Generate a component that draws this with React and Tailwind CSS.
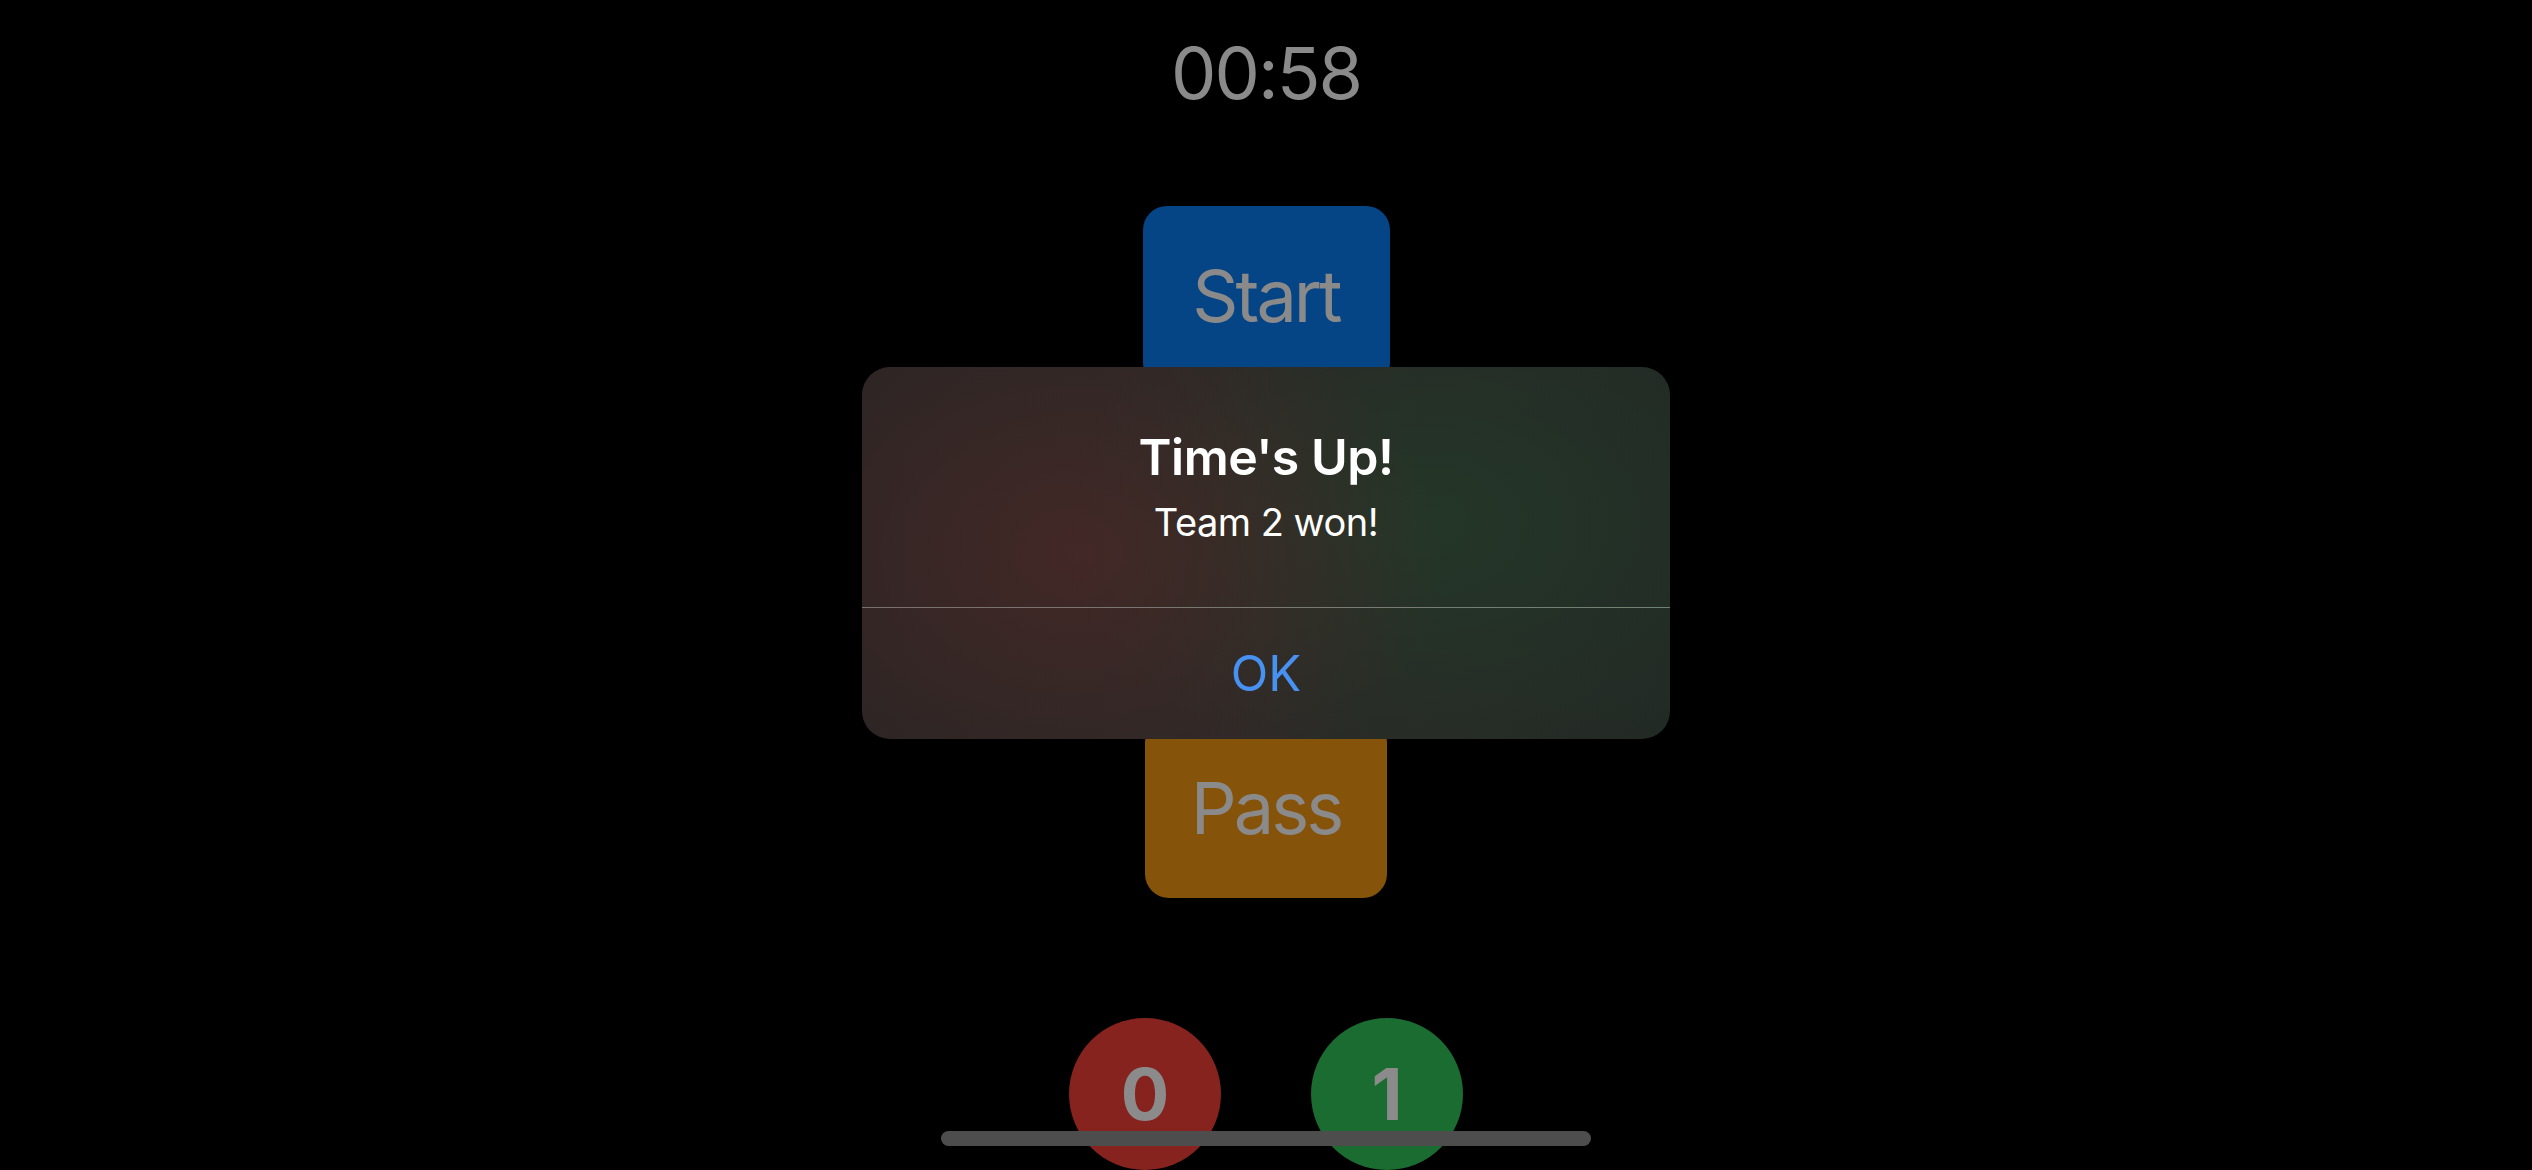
export default function App() {
  return (
    <div
      className="relative w-full h-[1170px] bg-black overflow-hidden flex flex-col items-center"
      style={{ fontFamily: "Inter, 'Noto Sans', sans-serif" }}
    >
      <div className="mt-[37px] text-[72px] leading-none font-normal tracking-[-2px] text-[#8a8a8a]">00:58</div>

      <div className="mt-[97px] w-[247px] h-[182px] rounded-[24px] bg-[#054585] flex items-center justify-center">
        <span className="text-[72px] leading-none font-normal tracking-[-3px] text-[#8a8a8a]">Start</span>
      </div>

      <div className="mt-[331px] w-[242px] h-[182px] rounded-[24px] bg-[#85530a] flex items-center justify-center">
        <span className="text-[72px] leading-none font-normal tracking-[-3px] text-[#8a8a8a]">Pass</span>
      </div>

      <div className="mt-[120px] flex gap-[90px]">
        <div className="w-[152px] h-[152px] rounded-full bg-[#87231f] flex items-center justify-center">
          <span className="text-[72px] leading-none font-bold text-[#8b8b8b]">0</span>
        </div>
        <div className="w-[152px] h-[152px] rounded-full bg-[#1a6c31] flex items-center justify-center">
          <span className="text-[72px] leading-none font-bold text-[#8b8b8b]">1</span>
        </div>
      </div>

      {/* Alert */}
      <div className="absolute left-1/2 -translate-x-1/2 top-[367px] w-[808px] h-[372px] rounded-[28px] overflow-hidden flex flex-col bg-[linear-gradient(to_right,#2b2524,#2c2927_50%,#222a25)]">
        <div className="absolute inset-0 bg-[radial-gradient(ellipse_45%_70%_at_27%_50%,rgba(72,40,38,0.8),transparent),radial-gradient(ellipse_45%_70%_at_70%_42%,rgba(34,58,40,0.8),transparent)]" />
        <div className="relative flex flex-col items-center h-[240px]">
          <div className="mt-[65px] text-[50px] leading-none font-semibold tracking-[-0.5px] text-white">Time's Up!</div>
          <div className="mt-[21px] text-[38px] leading-none font-normal tracking-[-0.5px] text-white">Team 2 won!</div>
        </div>
        <div className="relative h-px bg-[linear-gradient(to_right,#7a6e6c,#7a7874_50%,#6f8272)]" />
        <div className="relative flex-1 flex items-center justify-center">
          <span className="text-[49px] leading-none font-normal text-[#4791f2]">OK</span>
        </div>
      </div>

      {/* Home indicator */}
      <div className="absolute left-1/2 -translate-x-1/2 bottom-[24px] w-[650px] h-[15px] rounded-full bg-[#4d4d4d]" />
    </div>
  );
}
